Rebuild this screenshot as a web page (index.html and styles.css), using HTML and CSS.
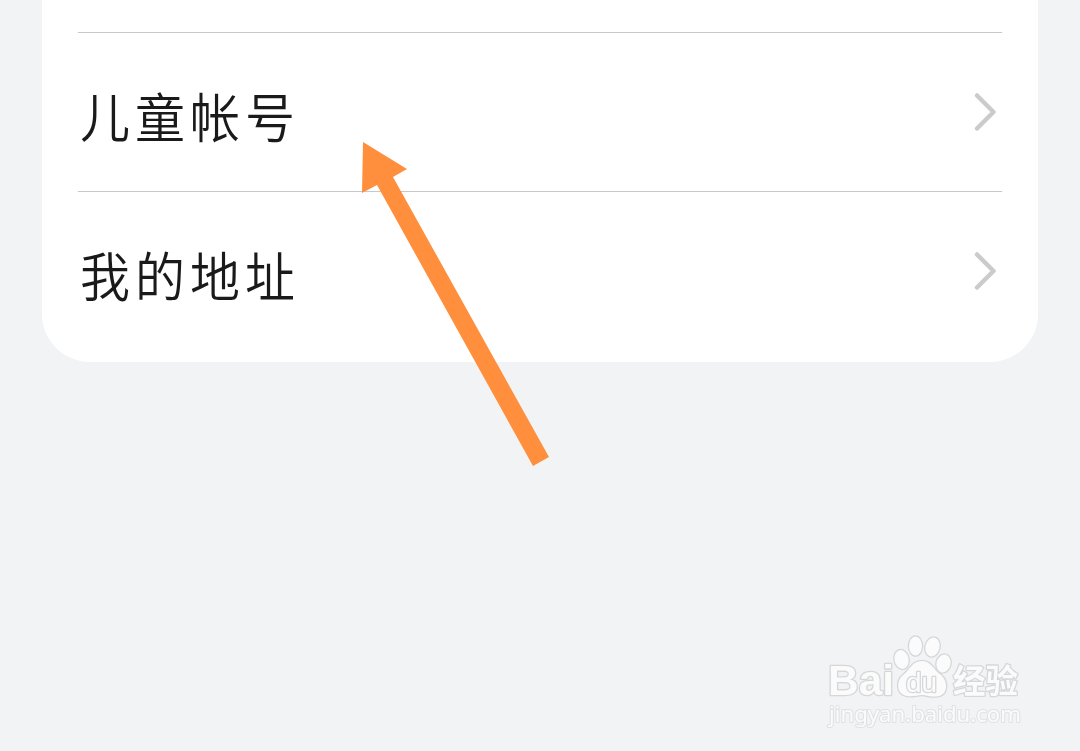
FILE: index.html
```html
<!DOCTYPE html>
<html lang="zh-CN">
<head>
    <meta charset="UTF-8">
    <meta name="viewport" content="width=device-width, initial-scale=1.0">
    <title>帐号</title>
    <link rel="stylesheet" href="styles.css">
</head>
<body>
    <main class="settings-card">
        <a class="settings-row">
            <span class="row-label">儿童帐号</span>
            <svg class="row-chevron" viewBox="0 0 24 42">
                <path d="M4 4.500 L20.500 21 L4 37.500"/>
            </svg>
        </a>
        <a class="settings-row">
            <span class="row-label">我的地址</span>
            <svg class="row-chevron" viewBox="0 0 24 42">
                <path d="M4 4.500 L20.500 21 L4 37.500"/>
            </svg>
        </a>
    </main>

    <!-- Pointer arrow over the list -->
    <svg class="pointer-arrow" viewBox="0 0 190 326">
        <path d="M3 2 L47 29 L33 37 L189 317 L173 326 L17 45 L2 53 Z"/>
    </svg>

    <svg class="watermark" viewBox="0 0 230 120">
        <g class="watermark-shapes">
            <ellipse cx="91.500" cy="39.500" rx="7" ry="9.500" transform="rotate(-12 91.500 39.500)"/>
            <ellipse cx="105.500" cy="26" rx="6.500" ry="9.500"/>
            <ellipse cx="122.500" cy="27" rx="7" ry="9.500" transform="rotate(14 122.500 27)"/>
            <ellipse cx="133.500" cy="43.500" rx="7" ry="9" transform="rotate(14 133.500 43.500)"/>
            <path d="M112 41 C122 41 124 51 131 55 C138 61 139 76 126 76.500 C119 77 116 75 112 75 C107 75 103 77 97 76 C86 74 86 61 93 55 C100 50 102 41 112 41 Z"/>
        </g>
        <text class="watermark-bai" x="18" y="75" textLength="66" lengthAdjust="spacingAndGlyphs">Bai</text>
        <text class="watermark-du" x="96" y="71.500" textLength="31" lengthAdjust="spacingAndGlyphs">du</text>
        <text class="watermark-name" x="143" y="73" textLength="65" lengthAdjust="spacingAndGlyphs">经验</text>
        <text class="watermark-url" x="19" y="101.500" textLength="192" lengthAdjust="spacingAndGlyphs">jingyan.baidu.com</text>
    </svg>
</body>
</html>
```

FILE: styles.css
```css
* {
    box-sizing: border-box;
}

body {
    margin: 0;
    height: 751px;
    overflow: hidden;
    position: relative;
    background: #f1f3f5;
    color: #1a1a1a;
    font-family: "Noto Sans CJK SC", sans-serif;
}

.settings-card {
    height: 362px;
    margin: 0 42px;
    padding: 32px 36px 0;
    background: #fff;
    border-radius: 0 0 48px 48px;
}

.settings-row {
    display: flex;
    align-items: center;
    justify-content: space-between;
    height: 159px;
    padding: 0 5px 0 2px;
    border-top: 1px solid #c8c8c8;
}

.row-label {
    display: block;
    font-size: 50px;
    font-weight: 350;
    line-height: 72px;
    letter-spacing: 5px;
    margin-top: 6px;
    transform: scaleY(1.06);
}

.row-chevron {
    width: 24px;
    height: 42px;
}

.row-chevron path {
    fill: none;
    stroke: #cbcbcb;
    stroke-width: 4.5;
    stroke-linecap: round;
    stroke-linejoin: round;
}

.pointer-arrow {
    position: absolute;
    left: 360px;
    top: 140px;
    width: 190px;
    height: 326px;
    fill: #ff8f3c;
}

.watermark {
    position: absolute;
    left: 810px;
    top: 620px;
    width: 230px;
    height: 120px;
    will-change: transform;
}

.watermark-shapes,
.watermark text {
    fill: #fbfbfc;
    stroke: #d6d7d8;
    stroke-width: 2.6;
    stroke-linejoin: round;
    paint-order: stroke;
}

.watermark-bai,
.watermark-du {
    font-family: "Liberation Sans", sans-serif;
}

.watermark-bai {
    font-size: 42px;
    font-weight: 700;
}

.watermark-du {
    font-size: 28px;
}

.watermark-name {
    font-size: 33px;
    font-weight: 700;
}

.watermark .watermark-url {
    font-family: "Noto Sans", sans-serif;
    font-size: 21px;
    stroke: #e0e1e3;
    stroke-width: 2;
}
```
